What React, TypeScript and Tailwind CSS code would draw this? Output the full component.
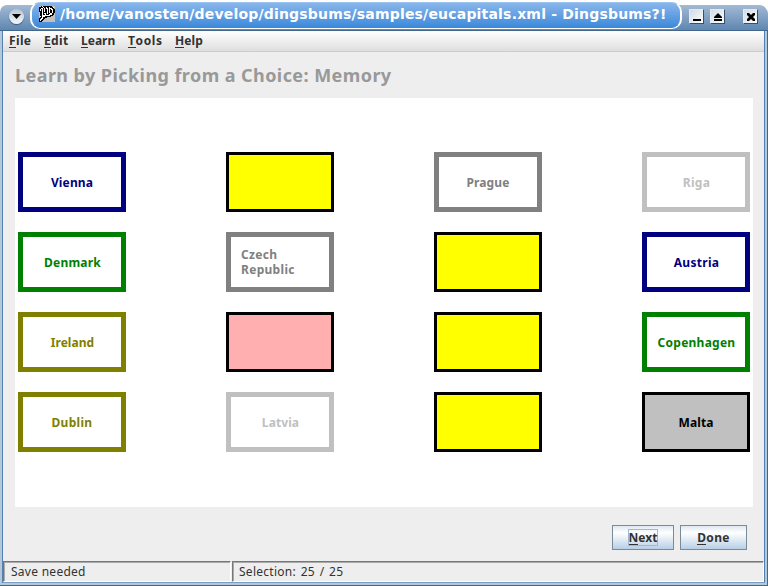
import React from "react";

type Card = { text?: string; style: string };

const navy = "border-[5px] border-[#000080] text-[#000080] bg-white";
const green = "border-[5px] border-[#008000] text-[#008000] bg-white";
const olive = "border-[5px] border-[#808000] text-[#808000] bg-white";
const gray = "border-[5px] border-[#808080] text-[#808080] bg-white";
const silver = "border-[5px] border-[#c0c0c0] text-[#c0c0c0] bg-white";
const hidden = "border-[3px] border-black bg-[#ffff00]";
const picked = "border-[3px] border-black bg-[#ffafaf]";
const single = "border-[3px] border-black bg-[#c0c0c0] text-black";

const cards: Card[] = [
  { text: "Vienna", style: navy + " tracking-[0.15px]" },
  { style: hidden },
  { text: "Prague", style: gray + " tracking-[0.1px]" },
  { text: "Riga", style: silver + " tracking-[0.3px] pl-px" },
  { text: "Denmark", style: green + " tracking-[0.2px] pl-px" },
  { text: "Czech Republic", style: gray + " tracking-[0.3px]" },
  { style: hidden },
  { text: "Austria", style: navy + " tracking-[0.3px] pl-px" },
  { text: "Ireland", style: olive + " tracking-[0.05px] pl-px" },
  { style: picked },
  { style: hidden },
  { text: "Copenhagen", style: green + " tracking-[0.25px] pl-px" },
  { text: "Dublin", style: olive + " tracking-[0.3px]" },
  { text: "Latvia", style: silver + " tracking-[0.1px] pl-px" },
  { style: hidden },
  { text: "Malta", style: single + " tracking-[0.1px]" },
];

const menus = [
  { text: "File", width: "w-[35px] tracking-[0.35px]" },
  { text: "Edit", width: "w-[37px] tracking-[0.35px]" },
  { text: "Learn", width: "w-[47px]" },
  { text: "Tools", width: "w-[47px] tracking-[0.6px]" },
  { text: "Help", width: "w-[40px] tracking-[0.1px]" },
];

function Mnemonic({ text }: { text: string }) {
  return (
    <span className="whitespace-nowrap">
      <span className="inline-block leading-[13px] shadow-[0_1px_0_#333]">{text[0]}</span>
      {text.slice(1)}
    </span>
  );
}

const bitmap = [
  "..#.#########...",
  "####.##.##.###..",
  "##..#.#..#...##.",
  "#.#.#.##.#.#..##",
  "#.#.#.##.#.##.##",
  "###.#.##.#.##.##",
  ".##.####.#.##.##",
  ".##.#..#.##..##.",
  ".##.##.###...##.",
  ".##........###..",
  "..#...######....",
  ".##.####........",
  "##..##..........",
  "#..##...........",
  "#.##............",
  "###.............",
];

function AppIcon() {
  return (
    <svg width="16" height="16" viewBox="0 0 16 16" shapeRendering="crispEdges">
      <rect width="16" height="16" fill="#c0c0c0" />
      <path d="M0 1h2V0h11v1h2v2h1v4h-1v2h-3v1H8v1H6v2H5v1H3v2H0v-4h1V6H0z" fill="#fff" />
      {bitmap.flatMap((row, y) =>
        row.split("").map((c, x) => (c === "#" ? <rect key={`${x}-${y}`} x={x} y={y} width="1" height="1" fill="#000" /> : null)),
      )}
    </svg>
  );
}

function WindowButton({ children }: { children: React.ReactNode }) {
  return (
    <div className="h-[15px] w-[15px] border border-t-[#e5ebf2] border-l-[#e5ebf2] border-r-[#35506f] border-b-[#35506f] bg-linear-to-br from-[#d2dae5] to-white">
      <svg width="13" height="13" viewBox="0 0 13 13" fill="#000">{children}</svg>
    </div>
  );
}

export default function App() {
  return (
    <div className="flex h-[586px] w-[768px] flex-col overflow-hidden bg-white font-['Noto_Sans','DejaVu_Sans',sans-serif] text-[12px] text-[#333]">
      <header className="relative h-[31px] shrink-0">
        <div className="absolute inset-x-0 top-[5px] bottom-0 rounded-tl-[7px] rounded-tr-[9px] border-b border-[#41688f] bg-linear-to-b from-[#a3bad3] to-[#5f87b1]" />
        <div className="absolute top-[9px] left-[9px] flex h-[15px] w-[15px] items-center justify-center rounded-full bg-linear-to-b from-[#b9c5d3] to-[#f4f8fc] shadow-[0_1px_1px_#3c5878]">
          <svg width="9" height="5" viewBox="0 0 9 5"><path d="M0 0h9L4.500 5z" /></svg>
        </div>
        <div className="absolute top-[2px] left-[30px] flex h-[27px] w-[652px] items-center rounded-[10px] border border-t-[#9dc3ef] border-r-2 border-b-white border-l-2 border-x-white bg-linear-to-b from-[#88b6ea] to-[#3988da] pl-[7px]">
          <div className="-mt-[3px]"><AppIcon /></div>
          <span className="-mt-[3px] ml-[5px] whitespace-nowrap font-['DejaVu_Sans',sans-serif] text-[14px] leading-[16px] font-bold tracking-[0.19px] text-white">
            /home/vanosten/develop/dingsbums/samples/eucapitals.xml - Dingsbums?!
          </span>
        </div>
        <div className="absolute top-[9px] left-[689px] flex">
          <WindowButton><path d="M3 9h8v2H3z" /></WindowButton>
          <div className="w-[6px]" />
          <WindowButton><path d="M3 9h8v2H3zM3 8V7l4-4 4 4v1z" /></WindowButton>
          <div className="w-[18px]" />
          <WindowButton><path d="M3 3h2l2 2 2-2h2v2L9 7l2 2v2H9L7 9l-2 2H3V9l2-2-2-2z" /></WindowButton>
        </div>
      </header>
      <div className="flex min-h-0 flex-1 border-r border-b border-r-[#41688f] border-b-[#41688f] bg-[#b4c8dc] pr-[2px] pb-[2px] pl-[2px]">
        <div className="flex min-w-0 flex-1 flex-col border-x border-b border-[#5580ad] border-b-[#7b9dc4] bg-[#eee]">
          <nav className="flex h-[21px] shrink-0 items-center border-b border-[#ccc] bg-linear-to-b from-white to-[#dedede] pl-[6px] font-bold">
            {menus.map((m) => (
              <div key={m.text} className={m.width}><Mnemonic text={m.text} /></div>
            ))}
          </nav>
          <main className="flex flex-1 flex-col px-3">
            <h1 className="mt-[11px] h-[35px] whitespace-nowrap text-[18px] leading-[24px] font-bold tracking-[0.43px] text-[#999]">
              Learn by Picking from a Choice: Memory
            </h1>
            <section className="grid h-[409px] w-[738px] grid-cols-[repeat(4,108px)] content-start gap-x-[100px] gap-y-[20px] bg-white px-[3px] pt-[54px] font-bold">
              {cards.map((card, i) => (
                <div key={i} className={`flex h-[60px] items-center justify-center leading-[15px] ${card.style}`}>
                  {card.text === "Czech Republic" ? <span className="w-[78px]">Czech<br />Republic</span> : card.text}
                </div>
              ))}
            </section>
            <div className="mt-[18px] flex justify-end gap-[6px] pr-[5px] font-bold">
              <button className="flex h-[25px] w-[62px] items-center justify-center border border-[#7a8a99] bg-linear-to-b from-[#dde8f3] via-white via-30% to-[#b8cfe5]">
                <span className="flex h-[17px] w-[30px] items-center justify-center border border-[#a3b8cc]"><Mnemonic text="Next" /></span>
              </button>
              <button className="flex h-[25px] w-[67px] items-center justify-center border border-[#7a8a99] bg-linear-to-b from-[#dde8f3] via-white via-30% to-[#b8cfe5] tracking-[0.3px]">
                <Mnemonic text="Done" />
              </button>
            </div>
          </main>
          <footer className="flex h-[21px] shrink-0 leading-[20px]">
            <div className="w-[228px] border border-t-[#777] border-r-white border-b-white border-l-[#777] pl-[7px] tracking-[0.27px] shadow-[inset_1px_1px_0_#aaa]">Save needed</div>
            <div className="ml-px flex-1 border border-t-[#777] border-r-white border-b-white border-l-[#777] pl-[6px] tracking-[0.27px] [word-spacing:1.3px] shadow-[inset_1px_1px_0_#aaa]">Selection: 25 / 25</div>
          </footer>
        </div>
      </div>
    </div>
  );
}
